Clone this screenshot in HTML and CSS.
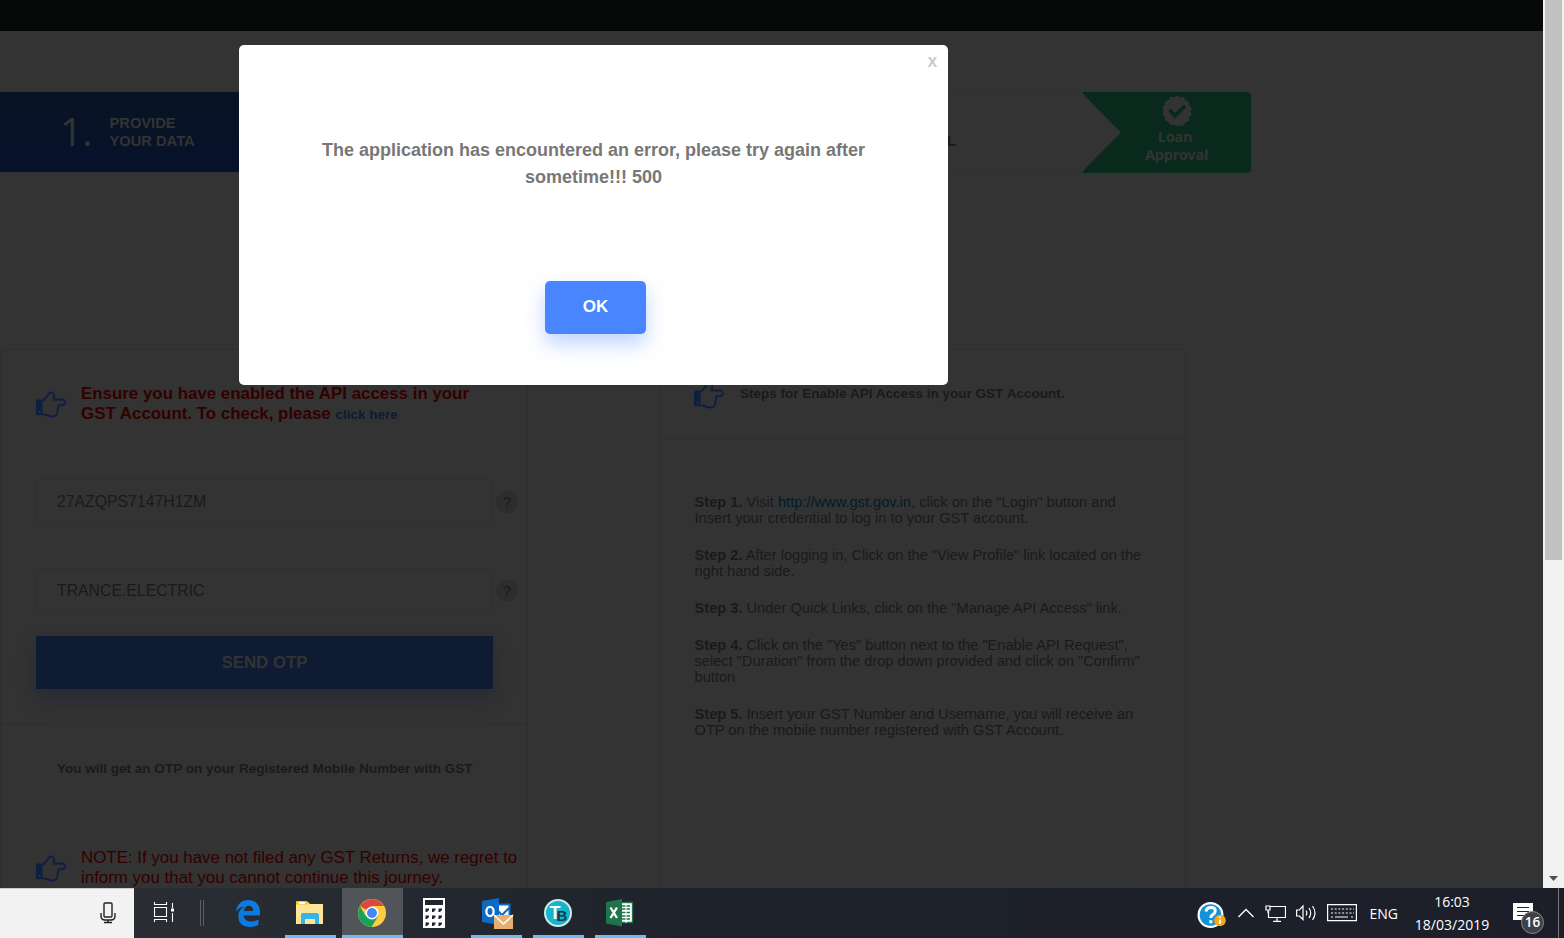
FILE: index.html
```html
<!DOCTYPE html>
<html lang="en">
<head>
<meta charset="utf-8">
<title>Provide your data</title>
<link rel="stylesheet" href="styles.css">
</head>
<body>
<svg width="0" height="0" class="defs">
  <symbol id="hand" viewBox="0 0 30 27">
    <path d="M1 10h5.500v13.500H1z" fill="currentColor"/>
    <path d="M1.500 9.500H7C10 7.500 11.500 4.500 13 2.200Q14 1 16 1.500Q19.500 3 17.500 8.500H26Q29 8.800 29 11.300T26 14.300H22.500Q22.500 17 21.300 19Q22 22.500 20 24.300Q17 26.500 12 24.500Q9.500 23.500 7 23.300H1.500Q1 23.300 1 22.500V10Q1 9.500 1.500 9.500Z" fill="none" stroke="currentColor" stroke-width="1.900"/>
    <circle cx="3.600" cy="20.800" r="1" fill="#333"/>
  </symbol>
</svg>
<div class="screen">
  <div class="browser">
    <div class="page">
      <header class="topbar"></header>
      <div class="steps">
        <div class="step-one">
          <span class="num">1.</span>
          <div class="step-label"><span>PROVIDE</span><span>YOUR DATA</span></div>
        </div>
        <div class="step-mid"><span>APPROVAL</span></div>
        <div class="step-loan">
          <svg class="arrow" width="40" height="81" viewBox="0 0 40 81"><path d="M0 0V2L38 40.500L0 79V81H40V0Z" fill="#08291c"/></svg>
          <div class="loan">
            <svg width="32" height="32" viewBox="0 0 32 32"><path d="M16 .5l3.200 1.800 3.700-.3 1.800 3.200 3.400 1.500.1 3.700 2.500 2.700-1.200 3.400 1.200 3.500-2.700 2.600-.3 3.700-3.500 1.300-2 3.200-3.700-.4L16 31.500l-3-1.700-3.600.3-1.900-3.200-3.400-1.300-.3-3.700L1.200 19.200l1.300-3.400-1.200-3.500L4 9.700l.3-3.700 3.500-1.200 1.800-3.200 3.600.6z" fill="#333"/><path d="M9.500 16l4.600 4.800 8.700-8.700" fill="none" stroke="#08291c" stroke-width="3.800" stroke-linecap="round"/></svg>
            <span class="loan-top">Loan</span><span>Approval</span>
          </div>
        </div>
      </div>
      <div class="panels">
        <section class="panel left">
          <div class="notice first">
            <svg class="hand" width="30" height="27"><use href="#hand"/></svg>
            <div class="warn bold">Ensure you have enabled the API access in your<br>GST Account. To check, please <a class="here">click here</a></div>
          </div>
          <div class="field-row"><div class="field">27AZQPS7147H1ZM</div><span class="help">?</span></div>
          <div class="field-row second"><div class="field">TRANCE.ELECTRIC</div><span class="help">?</span></div>
          <div class="send">SEND OTP</div>
          <div class="otp">You will get an OTP on your Registered Mobile Number with GST</div>
          <div class="notice note">
            <svg class="hand" width="30" height="27"><use href="#hand"/></svg>
            <div class="warn">NOTE: If you have not filed any GST Returns, we regret to<br>inform you that you cannot continue this journey.</div>
          </div>
        </section>
        <section class="panel right">
          <div class="right-head">
            <svg class="hand" width="30" height="27"><use href="#hand"/></svg>
            <span>Steps for Enable API Access in your GST Account.</span>
          </div>
          <div class="list">
            <p><b>Step 1.</b> Visit <a>http://www.gst.gov.in</a>, click on the "Login" button and<br>Insert your credential to log in to your GST account.</p>
            <p><b>Step 2.</b> After logging in, Click on the "View Profile" link located on the<br>right hand side.</p>
            <p><b>Step 3.</b> Under Quick Links, click on the "Manage API Access" link.</p>
            <p><b>Step 4.</b> Click on the "Yes" button next to the "Enable API Request",<br>select "Duration" from the drop down provided and click on "Confirm"<br>button</p>
            <p><b>Step 5.</b> Insert your GST Number and Username, you will receive an<br>OTP on the mobile number registered with GST Account.</p>
          </div>
        </section>
      </div>
      <div class="modal">
        <span class="close">X</span>
        <div class="msg">The application has encountered an error, please try again after<br>sometime!!! 500</div>
        <div class="ok">OK</div>
      </div>
    </div>
    <div class="scrollbar"><div class="thumb"></div><svg width="9" height="5" viewBox="0 0 9 5"><path d="M0 0h9L4.500 5z" fill="#505050"/></svg></div>
  </div>
  <footer class="taskbar">
    <div class="search"><svg width="16" height="22" viewBox="0 0 16 22" fill="none" stroke="#222" stroke-width="1.400"><rect x="4" y="1" width="8" height="14" rx="1"/><path d="M1 11v3q0 4 4 4h6q4 0 4-4v-3M8 18v2.500M4 20.500h8"/></svg></div>
    <div class="app view"><svg width="22" height="20" viewBox="0 0 22 20" fill="none" stroke="#fff" stroke-width="1.100"><path d="M1.500 5.500h12v9h-12zM1.500 0v2.500h12V0M1.500 20v-2.500h12V20M19.500 1v5M19.500 11v9"/><path d="M18 6.500h3v3h-3z" fill="#fff" stroke="none"/></svg></div>
    <div class="sep"></div>
    <div class="app edge"><svg class="low" width="26" height="28" viewBox="0 0 26 28"><path d="M1 12.500C2 5 7 1 13 1c7.500 0 12 5 12 12v3.500H8.700c.4 4 3.600 6 7.600 6 2.700 0 5-.7 7.200-2v5.300C21 27.300 18 28 15 28 8 28 3.300 24 3.300 17.500 3.300 13 5.500 9.600 9.500 7.600 5.800 8.200 3.200 9.600 1 12.500zM8.900 12h9.200c0-3-1.600-5.200-4.400-5.200-2.600 0-4.300 2-4.800 5.200z" fill="#0a7be0"/></svg></div>
    <div class="app on"><svg class="low" width="28" height="26" viewBox="0 0 28 26"><path d="M0 2h12l2 2h13v20H0z" fill="#fde496"/><path d="M0 2q0-1 1-1h9q1 0 2 1l1.500 2.500H0z" fill="#fdc71c"/><path d="M3 2h6v2H3z" fill="#fff"/><path d="M5 24V15q0-2 2-2h14q2 0 2 2v9h-4v-5h-10v5z" fill="#35b4e6"/></svg></div>
    <div class="app on active"><svg class="low" width="28" height="28" viewBox="0 0 28 28"><circle cx="14" cy="14" r="14" fill="#ffcd42"/><path d="M14 14L1.900 7A14 14 0 0 1 26.100 7H14z" fill="#dc4a3e"/><path d="M1.900 7A14 14 0 0 0 13.500 28L20 17.500 14 14 8 17.500z" fill="#1aa15f"/><circle cx="14" cy="14" r="6.500" fill="#fff"/><circle cx="14" cy="14" r="5" fill="#4587f4"/></svg></div>
    <div class="app"><svg class="low" width="22" height="30" viewBox="0 0 22 30"><path d="M0 0h22v30H0z" fill="#fff"/><path d="M2 2h18v5H2z" fill="#20242b"/><path d="M2.500 10.500h3.500v1.500L4 14H2.500zM9 10.500h3.500v1.500l-2 2H9zM15.500 10.500H19v1.500l-2 2h-1.500zM2.500 17.500h3.500v1.500L4 21H2.500zM9 17.500h3.500v1.500l-2 2H9zM15.500 17.500H19v1.500l-2 2h-1.500zM2.500 24.500h3.500v1.500L4 28H2.500zM9 24.500h3.500v1.500l-2 2H9zM15.500 24.500H19v1.500l-2 2h-1.500z" fill="#20242b"/></svg></div>
    <div class="app on out"><svg class="low2" width="32" height="31" viewBox="0 0 32 31"><path d="M14 6h14v14H14z" fill="#fff"/><path d="M14 6.500h13.500V20M16 13l4 4 8-8" fill="none" stroke="#0a6cc4" stroke-width="2"/><path d="M0 3l17-3v27L0 24z" fill="#0a6cc4"/><ellipse cx="8" cy="13.500" rx="3.600" ry="4.600" fill="none" stroke="#fff" stroke-width="2.300"/><path d="M12 17h19v14H12z" fill="#e8b06e"/><path d="M12 17l9.500 9 9.500-9" fill="none" stroke="#fff" stroke-width="1.500"/></svg></div>
    <div class="app on tb"><span class="disc"><b>T</b><i>B</i></span></div>
    <div class="app on"><svg class="low" width="28" height="28" viewBox="0 0 28 28"><path d="M14 3.500h12.500v20H14z" fill="#fff" stroke="#20744a" stroke-width="1.300"/><path d="M16 7h8M16 10h8M16 13.500h8M16 17h8M16 20h8" stroke="#20744a" stroke-width="1.600"/><path d="M20 4v20" stroke="#fff"/><path d="M0 3l16-3v27.500L0 24.500z" fill="#20744a"/><path d="M4.500 8.500l6.500 10.500M11 8.500L4.500 19" stroke="#fff" stroke-width="2.300"/></svg></div>
    <div class="tray">
      <svg class="low2" width="30" height="28" viewBox="0 0 30 28"><circle cx="13.500" cy="14" r="13" fill="#fff"/><circle cx="13.500" cy="14" r="10.800" fill="#1294d8"/><path d="M9 10.500q.5-4 5-4 4.300 0 4.300 3.600 0 2-2.500 3.500-2 1.200-2 3.400M13.800 19.300v3" fill="none" stroke="#fff" stroke-width="3"/><circle cx="23" cy="19.500" r="5.800" fill="#f3a81d"/><path d="M23 18.500v4.500M23 15.500v1.600" stroke="#fff" stroke-width="1.800"/></svg>
      <svg width="18" height="10" viewBox="0 0 18 10"><path d="M1.500 9l7.500-7.500L16.500 9" fill="none" stroke="#fff" stroke-width="1.300"/></svg>
      <svg width="22" height="18" viewBox="0 0 22 18" fill="none" stroke="#fff" stroke-width="1.200"><path d="M6 2.500h15.500v11H4.500V7M13 13.500V17M9 17.400h8M2 2h4v4H2zM4 6v3"/></svg>
      <svg width="22" height="18" viewBox="0 0 22 18" fill="none" stroke="#fff" stroke-width="1.200"><path d="M.6 6h2.700L7 2v13.500L3.300 12H.6zM10 6.500q1.600 2.500 0 5M13 4q3.400 5 0 10M16.500 2q5 7 0 14"/></svg>
      <svg width="30" height="18" viewBox="0 0 30 18" fill="none" stroke="#fff" stroke-width="1.200"><path d="M.6.6h28.800v16H.6z"/><path d="M4 5h23M4 9h23" stroke-dasharray="2 1.700"/><path d="M4 13h2M8 13h13M24 13h2"/></svg>
      <span class="lang">ENG</span>
      <div class="clock"><span>16:03</span><span>18/03/2019</span></div>
      <div class="action"><svg width="20" height="21" viewBox="0 0 20 21"><path d="M0 0h20v17h-7l-4 4v-4H0z" fill="#fff"/><path d="M4 4.500h12M4 8.500h12M4 12.500h9" stroke="#20242d" stroke-width="1.200"/></svg><span class="badge">16</span></div>
      <div class="edge-line"></div>
    </div>
  </footer>
</div>
</body>
</html>
```
FILE: styles.css
```css
* { box-sizing: border-box; }
body { margin: 0; background: #333; font-family: "Liberation Sans", Arial, sans-serif; }
.defs { position: absolute; }
.screen { width: 1564px; height: 938px; display: flex; flex-direction: column; overflow: hidden; }
.browser { height: 888px; display: flex; }
.page { position: relative; width: 1543px; height: 888px; background: #333; overflow: hidden; color: #1a1a1a; white-space: nowrap; }
.topbar { height: 31px; background: #060908; }
.steps { margin-top: 61px; display: flex; height: 81px; width: 1251px; }
.step-one { width: 300px; height: 80px; background: linear-gradient(#091323, #06122b); display: flex; align-items: center; padding-left: 60px; color: #333; }
.num { font: 500 39px/54px "Open Sans", sans-serif; width: 49.500px; padding-bottom: 3px; }
.step-label { font-size: 14.700px; font-weight: bold; line-height: 18px; display: flex; flex-direction: column; align-items: flex-start; }
.step-mid { flex: 1; border: 1px solid #2f2f2f; border-width: 1px 0; display: flex; justify-content: flex-end; padding: 39px 127px 0 0; font-size: 14.625px; font-weight: bold; line-height: 18px; }
.step-loan { display: flex; width: 168px; }
.loan { flex: 1; background: #08291c; border-radius: 0 4px 4px 0; display: flex; flex-direction: column; align-items: center; padding: 3px 20px 1px 0; margin-left: -1px; color: #333; font: bold 14.625px/18px "Noto Sans", "Open Sans", sans-serif; letter-spacing: -.25px; }
.loan-top { padding-right: 3px; }
.panels { display: flex; gap: 131px; margin-top: 176px; }
.panel { height: 600px; border: 1px solid #2e2e2e; border-radius: 5px; }
.left { width: 528px; }
.right { width: 527px; }
.hand { color: #0f1f42; flex: none; }
.notice { display: flex; gap: 15px; padding-left: 35px; color: #330000; font-size: 16.900px; line-height: 20px; }
.first { padding-top: 34px; height: 129px; }
.first .hand { margin-top: 7px; }
.bold { font-weight: bold; }
.here { color: #0e1b33; font-size: 13.500px; }
.field-row { display: flex; align-items: center; gap: 3px; padding-left: 35px; height: 45px; }
.second { margin-top: 44px; }
.field { width: 457px; height: 45px; border: 1px solid #2f2f2f; border-radius: 5px; padding-left: 20px; font-size: 15.800px; line-height: 43px; }
.help { width: 22px; height: 22px; margin-top: 1px; border-radius: 50%; background: #2d2d2d; font-size: 14.625px; line-height: 22px; text-align: center; }
.send { margin: 23px 0 0 35px; width: 457px; height: 53px; line-height: 53px; background: #0e1b33; color: #333; font-size: 16.875px; font-weight: bold; text-align: center; box-shadow: 0 10px 20px rgba(14, 27, 51, .35); }
.otp { margin-top: 34px; border-top: 1px solid #2e2e2e; padding: 35px 0 0 56px; height: 125px; font-size: 13.530px; font-weight: bold; line-height: 20px; }
.note .hand { margin-top: 7px; }
.right-head { height: 89px; border-bottom: 1px solid #2e2e2e; display: flex; padding: 31px 0 0 34px; font-size: 13.530px; font-weight: bold; line-height: 26px; gap: 16px; }
.right-head .hand { margin-top: 1px; }
.list { padding: 55px 0 0 34.500px; font-size: 14.640px; line-height: 16px; }
.list p { margin: 0 0 21px; }
.list a { color: #001d2c; }
.modal { position: absolute; left: 239px; top: 45px; width: 709px; height: 340px; background: #fff; border-radius: 5px; display: flex; flex-direction: column; align-items: center; padding-top: 92px; }
.close { position: absolute; right: 11px; top: 7px; font: bold 14px/20px "Open Sans", sans-serif; color: #c9c9c9; }
.msg { color: #777; font-size: 18px; font-weight: bold; line-height: 27px; text-align: center; }
.ok { margin: 90px 0 0 4px; width: 101px; height: 53px; border-radius: 5px; background: #4885ff; color: #fff; font-weight: bold; font-size: 17px; line-height: 51px; text-align: center; box-shadow: 0 10px 20px rgba(72, 133, 255, .35); }
.scrollbar { width: 21px; background: #f1f1f1; display: flex; flex-direction: column; align-items: center; justify-content: space-between; padding-bottom: 7px; }
.thumb { width: 17px; height: 560px; background: #c1c1c1; }
.taskbar { height: 50px; display: flex; background: linear-gradient(90deg, #2c3035, #1e222c 45%, #1c1f2a); }
.search { width: 134px; background: #f2f2f2; border-top: 1px solid #ccc; padding: 13px 0 0 100px; }
.app { width: 51px; margin-right: 11px; padding-right: 2px; display: flex; align-items: center; justify-content: center; border-bottom: 3px solid transparent; }
.low { margin-top: 2px; }
.low2 { margin-top: 4px; }
.out { padding: 0 0 0 2px; }
.on { border-color: #76b9ed; }
.active { width: 61px; margin: 0 6px 0 -5px; background: #515559; }
.view { width: 60px; margin: 0; padding: 0; }
.sep { width: 4px; height: 26px; margin: 12px 19px 0 6px; border: 1px solid #5b5e62; border-width: 0 1px; }
.disc { position: relative; width: 28px; height: 28px; margin-top: 2px; border: 2px solid #cfe8ec; border-radius: 50%; background: #15b5cc; color: #fff; font: bold 18px/24px "Liberation Sans", sans-serif; padding-left: 4px; }
.disc i { position: absolute; left: 11px; top: 6px; font: bold 15px/18px "Liberation Sans", sans-serif; color: #103a48; }
.tray { margin-left: auto; display: flex; align-items: center; color: #fff; font: 14px/23px "Open Sans", sans-serif; }
.tray > svg { margin-right: 9.500px; }
.lang { margin: 0 16px 0 3px; }
.clock { width: 76px; display: flex; flex-direction: column; align-items: center; margin-right: 23px; }
.action { position: relative; width: 45px; height: 21px; }
.badge { position: absolute; left: 8px; top: 8px; width: 23px; height: 23px; border-radius: 50%; border: 1px solid #888; background: #3e4147; font-weight: 600; font-size: 13.500px; line-height: 20px; text-align: center; }
.edge-line { width: 6px; height: 50px; border-left: 1px solid #777; }
```
